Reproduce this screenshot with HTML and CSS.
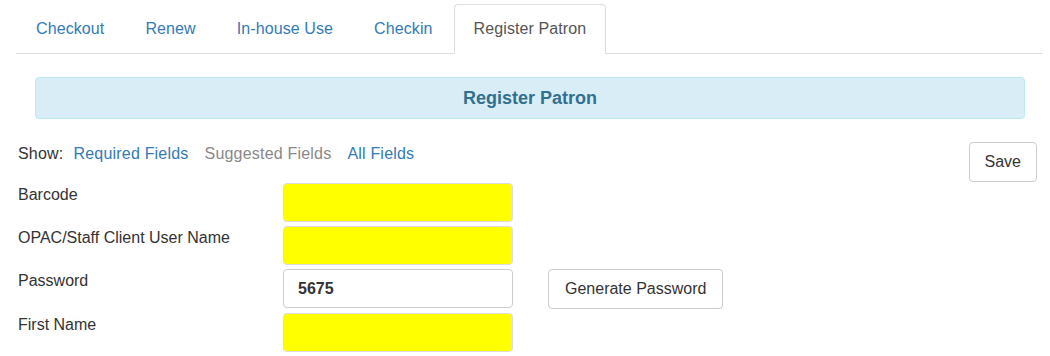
FILE: index.html
```html
<!DOCTYPE html>
<html lang="en">
<head>
    <meta charset="UTF-8">
    <title>Register Patron</title>
    <link rel="stylesheet" href="styles.css">
</head>
<body>
    <div class="page">
        <!-- Tabs -->
        <ul class="nav-tabs">
            <li><a href="#">Checkout</a></li>
            <li><a href="#">Renew</a></li>
            <li><a href="#">In-house Use</a></li>
            <li><a href="#">Checkin</a></li>
            <li class="active"><a href="#">Register Patron</a></li>
        </ul>

        <div class="alert-info">Register Patron</div>

        <div class="form-area">
            <div class="toolbar">
                <div class="show-links">
                    <span>Show:</span>
                    <a href="#">Required Fields</a>
                    <a href="#" class="muted">Suggested Fields</a>
                    <a href="#">All Fields</a>
                </div>
                <button class="btn">Save</button>
            </div>

            <div class="fields">
                <div class="field-row">
                    <label>Barcode</label>
                    <input class="required" type="text">
                </div>
                <div class="field-row">
                    <label>OPAC/Staff Client User Name</label>
                    <input class="required" type="text">
                </div>
                <div class="field-row">
                    <label>Password</label>
                    <input class="bold" type="text" value="5675">
                    <button class="btn btn-gen">Generate Password</button>
                </div>
                <div class="field-row">
                    <label>First Name</label>
                    <input class="required" type="text">
                </div>
            </div>
        </div>
    </div>
</body>
</html>
```
FILE: styles.css
```css
* {
    box-sizing: border-box;
}

body {
    margin: 0;
    font-family: "Liberation Sans", Arial, sans-serif;
    font-size: 16px;
    color: #333;
    background: #fff;
}

.page {
    padding: 4px 7px 0 16px;
}

a {
    color: #337ab7;
    text-decoration: none;
}

.nav-tabs {
    display: flex;
    list-style: none;
    margin: 0;
    padding: 0;
    border-bottom: 1px solid #ddd;
}

.nav-tabs li {
    margin-right: 1px;
    margin-bottom: -1px;
}

.nav-tabs a {
    display: block;
    padding: 12px 19px;
    line-height: 24px;
    letter-spacing: 0.1px;
    border: 1px solid transparent;
    border-radius: 4px 4px 0 0;
}

.nav-tabs .active a {
    color: #555;
    background: #fff;
    border-color: #ddd;
    border-bottom-color: #fff;
}

.alert-info {
    margin: 23px 18px 0 19px;
    padding: 10px;
    line-height: 20px;
    font-size: 18px;
    font-weight: bold;
    text-align: center;
    color: #31708f;
    background: #d9edf7;
    border: 1px solid #bce8f1;
    border-radius: 4px;
}

.form-area {
    padding: 23px 6px 0 2px;
}

.toolbar {
    display: flex;
    justify-content: space-between;
    align-items: flex-start;
}

.show-links {
    display: flex;
    gap: 16px;
    padding-top: 1px;
    line-height: 22px;
    letter-spacing: 0.2px;
}

.show-links span {
    margin-right: -6px;
}

.show-links .muted {
    color: #888;
}

.btn {
    font-family: inherit;
    font-size: 16px;
    color: #333;
    background: #fff;
    border: 1px solid #ccc;
    border-radius: 4px;
    padding: 0 15px;
    height: 40px;
    line-height: 22px;
}

.fields {
    margin-top: 1px;
    display: flex;
    flex-direction: column;
    gap: 4px;
}

.field-row {
    display: grid;
    grid-template-columns: 265px 230px auto;
    align-items: start;
}

.field-row label {
    line-height: 22px;
    padding-top: 1px;
}

.field-row input {
    height: 39px;
    padding: 0 14px;
    font-family: inherit;
    font-size: 16px;
    color: #333;
    background: #fff;
    border: 1px solid #ccc;
    border-radius: 4px;
}

.field-row input.required {
    background: #ffff00;
    border-color: #ddd;
}

.field-row input.bold {
    font-weight: bold;
}

.btn-gen {
    justify-self: start;
    margin-left: 35px;
    padding: 0 16px;
}
```
